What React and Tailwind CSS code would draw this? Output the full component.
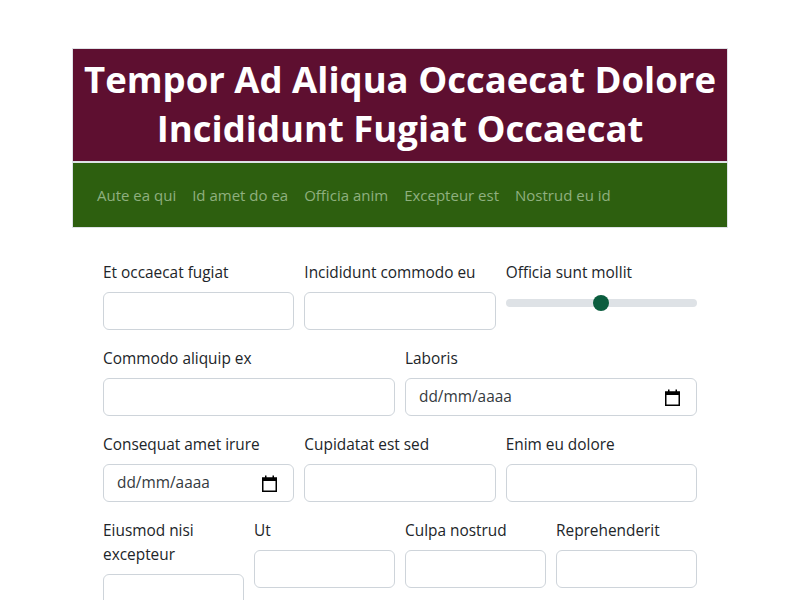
import { useState } from "react";

const FONT = "font-['Segoe_UI','Open_Sans','Noto_Sans',sans-serif]";

const NAV = ["Aute ea qui", "Id amet do ea", "Officia anim", "Excepteur est", "Nostrud eu id"];

function CalendarIcon() {
  return (
    <svg width="15" height="17" viewBox="0 0 15 17" className="shrink-0">
      <rect x="0.75" y="3" width="13.5" height="13.25" fill="none" stroke="#000" strokeWidth="1.5" />
      <rect x="0.75" y="3" width="13.5" height="3" fill="#000" />
      <rect x="3" y="0.5" width="1.5" height="3" fill="#000" />
      <rect x="10.5" y="0.5" width="1.5" height="3" fill="#000" />
    </svg>
  );
}

function Label({ children }) {
  return <label className="mb-[7px] block text-[15.4px] leading-6 text-[#212529]">{children}</label>;
}

function TextField({ label }) {
  return (
    <div className="flex flex-col">
      <Label>{label}</Label>
      <input
        type="text"
        className="h-[38px] w-full rounded-md border border-[#ced4da] bg-white px-3 text-[16px] outline-none"
      />
    </div>
  );
}

function DateField({ label }) {
  return (
    <div className="flex flex-col">
      <Label>{label}</Label>
      <div className="flex h-[38px] w-full items-center justify-between rounded-md border border-[#ced4da] bg-white pl-[13px] pr-4">
        <span className="text-[15.4px] text-[#343a40]">dd/mm/aaaa</span>
        <CalendarIcon />
      </div>
    </div>
  );
}

function RangeField({ label }) {
  const [value] = useState(50);
  return (
    <div className="flex flex-col">
      <Label>{label}</Label>
      <div className="relative mt-[3px] h-4 w-full">
        <div className="absolute left-0 right-0 top-1 h-2 rounded-full bg-[#dee2e6]" />
        <div
          className="absolute top-0 h-4 w-4 rounded-full bg-[#0b5d3e]"
          style={{ left: `calc(${value}% - ${value * 0.16}px)` }}
        />
      </div>
    </div>
  );
}

export default function App() {
  return (
    <div className={`min-h-screen bg-white pt-12 ${FONT}`}>
      <div className="mx-auto w-[656px]">
        <div className="border border-[#dee2e6]">
          <header className="bg-[#5e0f30] px-2 pb-[8px] pt-[6px] text-center">
            <h1 className="text-[36.5px] font-bold leading-[49px] text-white">
              Tempor Ad Aliqua Occaecat Dolore Incididunt Fugiat Occaecat
            </h1>
          </header>
          <div className="h-[2px] bg-[#dee2e6]" />
          <nav className="flex h-[64px] items-center gap-4 bg-[#2d5f0f] px-6">
            {NAV.map((item) => (
              <a key={item} href="#" className="text-[15px] text-[#8fb07f]">
                {item}
              </a>
            ))}
          </nav>
        </div>

        <form className="flex flex-col gap-[17px] px-[31px] pt-[33px]">
          <div className="grid grid-cols-3 gap-[10px]">
            <TextField label="Et occaecat fugiat" />
            <TextField label="Incididunt commodo eu" />
            <RangeField label="Officia sunt mollit" />
          </div>
          <div className="grid grid-cols-2 gap-[10px]">
            <TextField label="Commodo aliquip ex" />
            <DateField label="Laboris" />
          </div>
          <div className="grid grid-cols-3 gap-[10px]">
            <DateField label="Consequat amet irure" />
            <TextField label="Cupidatat est sed" />
            <TextField label="Enim eu dolore" />
          </div>
          <div className="grid grid-cols-4 items-start gap-[10px]">
            <TextField label="Eiusmod nisi excepteur" />
            <TextField label="Ut" />
            <TextField label="Culpa nostrud" />
            <TextField label="Reprehenderit" />
          </div>
        </form>
      </div>
    </div>
  );
}
